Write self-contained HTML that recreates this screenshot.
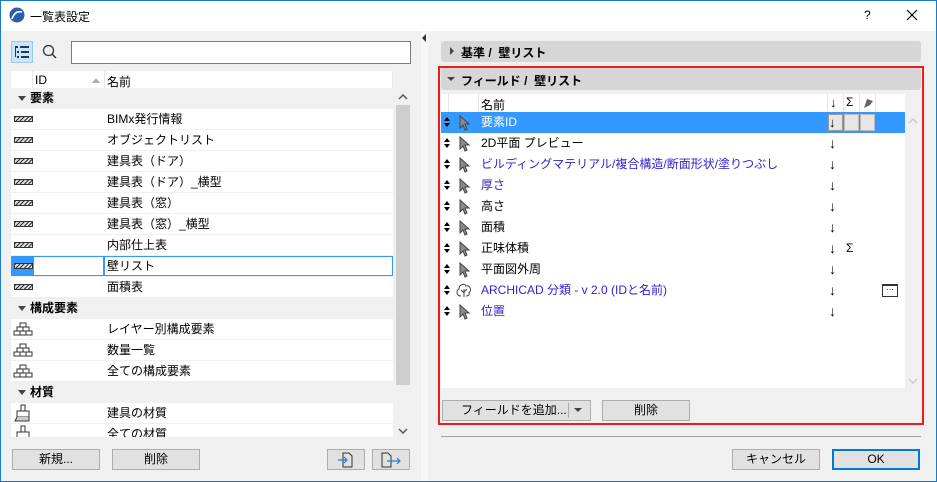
<!DOCTYPE html>
<html><head><meta charset="utf-8"><style>
*{box-sizing:border-box;margin:0;padding:0}
body{width:937px;height:482px;overflow:hidden;background:#f0f0f0;font-family:"Liberation Sans","Noto Sans CJK JP",sans-serif;font-size:12px;color:#000;position:relative}
.a{position:absolute}
.win{position:absolute;left:0;top:0;width:937px;height:482px;border:1px solid #1979ca}
.title{left:1px;top:1px;width:935px;height:30px;background:#fff}
.btn{position:absolute;background:#e1e1e1;border:1px solid #adadad;text-align:center;line-height:19px;font-size:12px}
.row{position:absolute;left:11px;width:382px;height:20px;background:#fff;line-height:20px}
.grp{position:absolute;left:11px;width:382px;height:20px;background:#f0f0f0;line-height:20px;font-weight:bold}
.grp:before{content:"";position:absolute;left:7px;top:8px;border-left:4px solid transparent;border-right:4px solid transparent;border-top:5px solid #444}
.grp span{position:absolute;left:8px}
.row .nm{position:absolute;left:96px}
.hatch{position:absolute;left:3px;top:7px;width:19px;height:6px;border:1px solid #333;background:repeating-linear-gradient(135deg,#333 0 1px,#ddd 1px 3px)}
.rr{position:absolute;left:441px;width:464px;height:21px;line-height:21px}
.rr .nm{position:absolute;left:40px}
.rr .ar{position:absolute;left:388px;font-size:14px}
.blue{color:#3322cc}
.rr svg{position:absolute}
</style></head><body>
<svg width="0" height="0" style="position:absolute"><defs>
<g id="ud"><path d="M0 4 L3 0 L6 4Z M0 6 L3 10 L6 6Z" fill="#000"/></g>
<g id="cur"><path d="M1 1 L1 13 L4 10 L6 15 L8 14 L6 9 L10 9 Z" fill="#8a8a8a" stroke="#444" stroke-width="1"/></g>
<g id="brick"><path d="M7 1 H13 V5 H7Z M4 5 H10 V9 H4Z M10 5 H16 V9 H10Z M1 9 H7 V13 H1Z M7 9 H13 V13 H7Z M13 9 H19 V13 H13Z" fill="#fff" stroke="#333" stroke-width="1"/></g>
<g id="brush"><path d="M7 1 H11 V7 H7Z M3 7 H15 V13 H3Z" fill="#fff" stroke="#333"/><path d="M3 13 L1 17 H15 L15 13" fill="#ccc" stroke="#333"/></g>
</defs></svg>
<div class="win"></div>
<div class="a title"></div>
<svg class="a" style="left:9px;top:7px" width="16" height="16"><circle cx="8" cy="8" r="7.5" fill="#2a5fb0"/><path d="M3 12 Q6 3 13 5" stroke="#fff" stroke-width="1.6" fill="none"/></svg>
<div class="a" style="left:30px;top:8px;font-size:12px">一覧表設定</div>
<div class="a" style="left:864px;top:8px;font-size:12px">?</div>
<svg class="a" style="left:906px;top:9px" width="12" height="12"><path d="M1 1 L11 11 M11 1 L1 11" stroke="#000" stroke-width="1.2"/></svg>

<!-- left toolbar -->
<div class="a" style="left:11px;top:41px;width:22px;height:22px;background:#cce4f7;border:1px solid #99c9ef"></div>
<svg class="a" style="left:14px;top:45px" width="16" height="14"><g fill="#1a3a6a"><rect x="1" y="1" width="3" height="2"/><rect x="6" y="1" width="9" height="2"/><rect x="3" y="6" width="2" height="2"/><rect x="7" y="6" width="8" height="2"/><rect x="3" y="11" width="2" height="2"/><rect x="7" y="11" width="8" height="2"/><rect x="1" y="3" width="1" height="9"/></g></svg>
<svg class="a" style="left:42px;top:44px" width="16" height="16"><circle cx="6.5" cy="6.5" r="5" stroke="#333" stroke-width="1.3" fill="none"/><path d="M10 10 L14 14" stroke="#333" stroke-width="1.5"/></svg>
<div class="a" style="left:71px;top:41px;width:340px;height:23px;background:#fff;border:1px solid #7a7a7a"></div>

<!-- left table -->
<div class="a" style="left:11px;top:71px;width:382px;height:18px;background:#fff"></div>
<div class="a" style="left:32px;top:71px;width:1px;height:18px;background:#e5e5e5"></div>
<div class="a" style="left:104px;top:71px;width:1px;height:18px;background:#e5e5e5"></div>
<div class="a" style="left:35px;top:73px">ID</div>
<div class="a" style="left:92px;top:78px;border-left:4px solid transparent;border-right:4px solid transparent;border-bottom:5px solid #aaa"></div>
<div class="a" style="left:107px;top:73px">名前</div>
<div class="a" style="left:392px;top:71px;width:1px;height:18px;background:#e5e5e5"></div>

<div class="grp" style="top:88px"><span style="left:19px">要素</span></div>
<div class="row" style="top:109px"><div class="hatch"></div><span class="nm">BIMx発行情報</span></div>
<div class="row" style="top:130px"><div class="hatch"></div><span class="nm">オブジェクトリスト</span></div>
<div class="row" style="top:151px"><div class="hatch"></div><span class="nm">建具表（ドア）</span></div>
<div class="row" style="top:172px"><div class="hatch"></div><span class="nm">建具表（ドア）_横型</span></div>
<div class="row" style="top:193px"><div class="hatch"></div><span class="nm">建具表（窓）</span></div>
<div class="row" style="top:214px"><div class="hatch"></div><span class="nm">建具表（窓）_横型</span></div>
<div class="row" style="top:235px"><div class="hatch"></div><span class="nm">内部仕上表</span></div>
<div class="row" style="top:256px"><div class="a" style="left:0;top:0;width:22px;height:20px;background:#3399ff"></div><div class="hatch"></div><div class="a" style="left:22px;top:0;width:71px;height:20px;border:1px solid #3399ff"></div><div class="a" style="left:93px;top:0;width:289px;height:20px;border:1px solid #3399ff"></div><span class="nm">壁リスト</span></div>
<div class="row" style="top:277px"><div class="hatch"></div><span class="nm">面積表</span></div>
<div class="grp" style="top:298px"><span style="left:19px">構成要素</span></div>
<div class="row" style="top:319px"><svg class="a" style="left:2px;top:3px" width="20" height="14"><use href="#brick"/></svg><span class="nm">レイヤー別構成要素</span></div>
<div class="row" style="top:340px"><svg class="a" style="left:2px;top:3px" width="20" height="14"><use href="#brick"/></svg><span class="nm">数量一覧</span></div>
<div class="row" style="top:361px"><svg class="a" style="left:2px;top:3px" width="20" height="14"><use href="#brick"/></svg><span class="nm">全ての構成要素</span></div>
<div class="grp" style="top:382px"><span style="left:19px">材質</span></div>
<div class="row" style="top:403px"><svg class="a" style="left:3px;top:1px" width="18" height="18"><use href="#brush"/></svg><span class="nm">建具の材質</span></div>
<div class="row" style="top:424px;height:13px;overflow:hidden"><svg class="a" style="left:3px;top:1px" width="18" height="18"><use href="#brush"/></svg><span class="nm">全ての材質</span></div>
<!-- left scrollbar -->
<div class="a" style="left:395px;top:88px;width:16px;height:349px;background:#f0f0f0"></div>
<svg class="a" style="left:398px;top:94px" width="10" height="6"><path d="M1 5 L5 1 L9 5" stroke="#555" fill="none" stroke-width="1.5"/></svg>
<div class="a" style="left:396px;top:105px;width:14px;height:280px;background:#cdcdcd"></div>
<svg class="a" style="left:398px;top:428px" width="10" height="6"><path d="M1 1 L5 5 L9 1" stroke="#555" fill="none" stroke-width="1.5"/></svg>

<div class="btn" style="left:12px;top:449px;width:88px;height:21px">新規...</div>
<div class="btn" style="left:112px;top:449px;width:88px;height:21px">削除</div>
<div class="btn" style="left:327px;top:449px;width:38px;height:21px"></div>
<svg class="a" style="left:337px;top:452px" width="18" height="16"><path d="M6 1 H12 L15 4 V15 H6 Z" fill="none" stroke="#333"/><path d="M1 8 H10 M7 5 L10 8 L7 11" stroke="#2a7ae2" fill="none" stroke-width="1.2"/></svg>
<div class="btn" style="left:372px;top:449px;width:38px;height:21px"></div>
<svg class="a" style="left:381px;top:452px" width="22" height="16"><path d="M1 1 H7 L10 4 V15 H1 Z" fill="none" stroke="#333"/><path d="M6 9 H19 M16 6 L19 9 L16 12" stroke="#2a7ae2" fill="none" stroke-width="1.2"/></svg>

<!-- splitter -->
<div class="a" style="left:421px;top:31px;width:7px;height:450px;background:#f7f7f7"></div>
<div class="a" style="left:422px;top:34px;border-top:4px solid transparent;border-bottom:4px solid transparent;border-right:4px solid #333"></div>

<!-- right -->
<div class="a" style="left:441px;top:41px;width:480px;height:21px;background:#d6d6d6;border-radius:3px"></div>
<div class="a" style="left:450px;top:47px;border-top:4px solid transparent;border-bottom:4px solid transparent;border-left:4px solid #444"></div>
<div class="a" style="left:461px;top:44px;font-weight:bold">基準 /&nbsp; 壁リスト</div>
<div class="a" style="left:438px;top:66px;width:486px;height:359px;border:2px solid #ee1c1c"></div>
<div class="a" style="left:441px;top:68px;width:480px;height:22px;background:#d6d6d6;border-radius:3px"></div>
<div class="a" style="left:447px;top:77px;border-left:4px solid transparent;border-right:4px solid transparent;border-top:4px solid #444"></div>
<div class="a" style="left:461px;top:72px;font-weight:bold">フィールド /&nbsp; 壁リスト</div>
<div class="a" style="left:441px;top:94px;width:464px;height:294px;background:#fff"></div>
<div class="a" style="left:448px;top:94px;width:1px;height:18px;background:#e5e5e5"></div>
<div class="a" style="left:478px;top:94px;width:1px;height:18px;background:#e5e5e5"></div>
<div class="a" style="left:827px;top:94px;width:1px;height:18px;background:#e5e5e5"></div>
<div class="a" style="left:843px;top:94px;width:1px;height:18px;background:#e5e5e5"></div>
<div class="a" style="left:859px;top:94px;width:1px;height:18px;background:#e5e5e5"></div>
<div class="a" style="left:875px;top:94px;width:1px;height:18px;background:#e5e5e5"></div>
<div class="a" style="left:481px;top:96px">名前</div>
<div class="a" style="left:830px;top:95px;font-size:13px">↓</div>
<div class="a" style="left:846px;top:95px">Σ</div>
<svg class="a" style="left:862px;top:97px" width="12" height="12"><path d="M2 11 L5 2 L11 4 L8 8 Z" fill="#666"/></svg>

<div class="rr" style="top:112px;background:#3399ff;color:#fff"><svg style="left:3px;top:5px" width="7" height="11"><use href="#ud"/></svg><svg style="left:18px;top:3px" width="12" height="16"><use href="#cur"/></svg><span class="nm">要素ID</span><div class="a" style="left:387px;top:2px;width:15px;height:17px;background:#e6e6e6;border:1px solid #999;color:#000;line-height:15px;font-size:13px">↓</div><div class="a" style="left:403px;top:2px;width:15px;height:17px;background:#e6e6e6;border:1px solid #bbb"></div><div class="a" style="left:419px;top:2px;width:15px;height:17px;background:#e6e6e6;border:1px solid #bbb"></div></div>
<div class="rr" style="top:133px"><svg style="left:3px;top:5px" width="7" height="11"><use href="#ud"/></svg><svg style="left:18px;top:3px" width="12" height="16"><use href="#cur"/></svg><span class="nm">2D平面 プレビュー</span><span class="ar">↓</span></div>
<div class="rr" style="top:154px"><svg style="left:3px;top:5px" width="7" height="11"><use href="#ud"/></svg><svg style="left:18px;top:3px" width="12" height="16"><use href="#cur"/></svg><span class="nm blue">ビルディングマテリアル/複合構造/断面形状/塗りつぶし</span><span class="ar">↓</span></div>
<div class="rr" style="top:175px"><svg style="left:3px;top:5px" width="7" height="11"><use href="#ud"/></svg><svg style="left:18px;top:3px" width="12" height="16"><use href="#cur"/></svg><span class="nm blue">厚さ</span><span class="ar">↓</span></div>
<div class="rr" style="top:196px"><svg style="left:3px;top:5px" width="7" height="11"><use href="#ud"/></svg><svg style="left:18px;top:3px" width="12" height="16"><use href="#cur"/></svg><span class="nm">高さ</span><span class="ar">↓</span></div>
<div class="rr" style="top:217px"><svg style="left:3px;top:5px" width="7" height="11"><use href="#ud"/></svg><svg style="left:18px;top:3px" width="12" height="16"><use href="#cur"/></svg><span class="nm">面積</span><span class="ar">↓</span></div>
<div class="rr" style="top:238px"><svg style="left:3px;top:5px" width="7" height="11"><use href="#ud"/></svg><svg style="left:18px;top:3px" width="12" height="16"><use href="#cur"/></svg><span class="nm">正味体積</span><span class="ar">↓</span><span class="a" style="left:405px">Σ</span></div>
<div class="rr" style="top:259px"><svg style="left:3px;top:5px" width="7" height="11"><use href="#ud"/></svg><svg style="left:18px;top:3px" width="12" height="16"><use href="#cur"/></svg><span class="nm">平面図外周</span><span class="ar">↓</span></div>
<div class="rr" style="top:280px"><svg style="left:3px;top:5px" width="7" height="11"><use href="#ud"/></svg><svg style="left:14px;top:2px" width="18" height="17"><path d="M9 15 V7 M9 11 L6 8 M9 10 L12 7 M6 14 C1 14 1 8 4 7 C4 2 10 1 11 4 C15 3 17 8 14 11 C15 14 11 14 11 14" fill="none" stroke="#444" stroke-width="1"/></svg><span class="nm blue">ARCHICAD 分類 - v 2.0 (IDと名前)</span><span class="ar">↓</span><div class="a" style="left:441px;top:4px;width:16px;height:13px;border:1px solid #333;border-top-width:2px;font-size:8px;line-height:8px;text-align:center">···</div></div>
<div class="rr" style="top:301px"><svg style="left:3px;top:5px" width="7" height="11"><use href="#ud"/></svg><svg style="left:18px;top:3px" width="12" height="16"><use href="#cur"/></svg><span class="nm blue">位置</span><span class="ar">↓</span></div>
<svg class="a" style="left:908px;top:118px" width="10" height="6"><path d="M1 5 L5 1 L9 5" stroke="#ccc" fill="none" stroke-width="1.5"/></svg>
<svg class="a" style="left:908px;top:378px" width="10" height="6"><path d="M1 1 L5 5 L9 1" stroke="#ccc" fill="none" stroke-width="1.5"/></svg>

<div class="btn" style="left:442px;top:400px;width:149px;height:21px;text-align:left;padding-left:18px">フィールドを追加...</div>
<div class="a" style="left:568px;top:403px;width:1px;height:15px;background:#adadad"></div>
<div class="a" style="left:574px;top:408px;border-left:4px solid transparent;border-right:4px solid transparent;border-top:4px solid #444"></div>
<div class="btn" style="left:602px;top:400px;width:88px;height:21px">削除</div>

<div class="a" style="left:441px;top:436px;width:480px;height:1px;background:#a0a0a0"></div>
<div class="btn" style="left:732px;top:449px;width:88px;height:21px">キャンセル</div>
<div class="btn" style="left:832px;top:449px;width:88px;height:21px;border:2px solid #0078d7;line-height:17px">OK</div>
</body></html>
